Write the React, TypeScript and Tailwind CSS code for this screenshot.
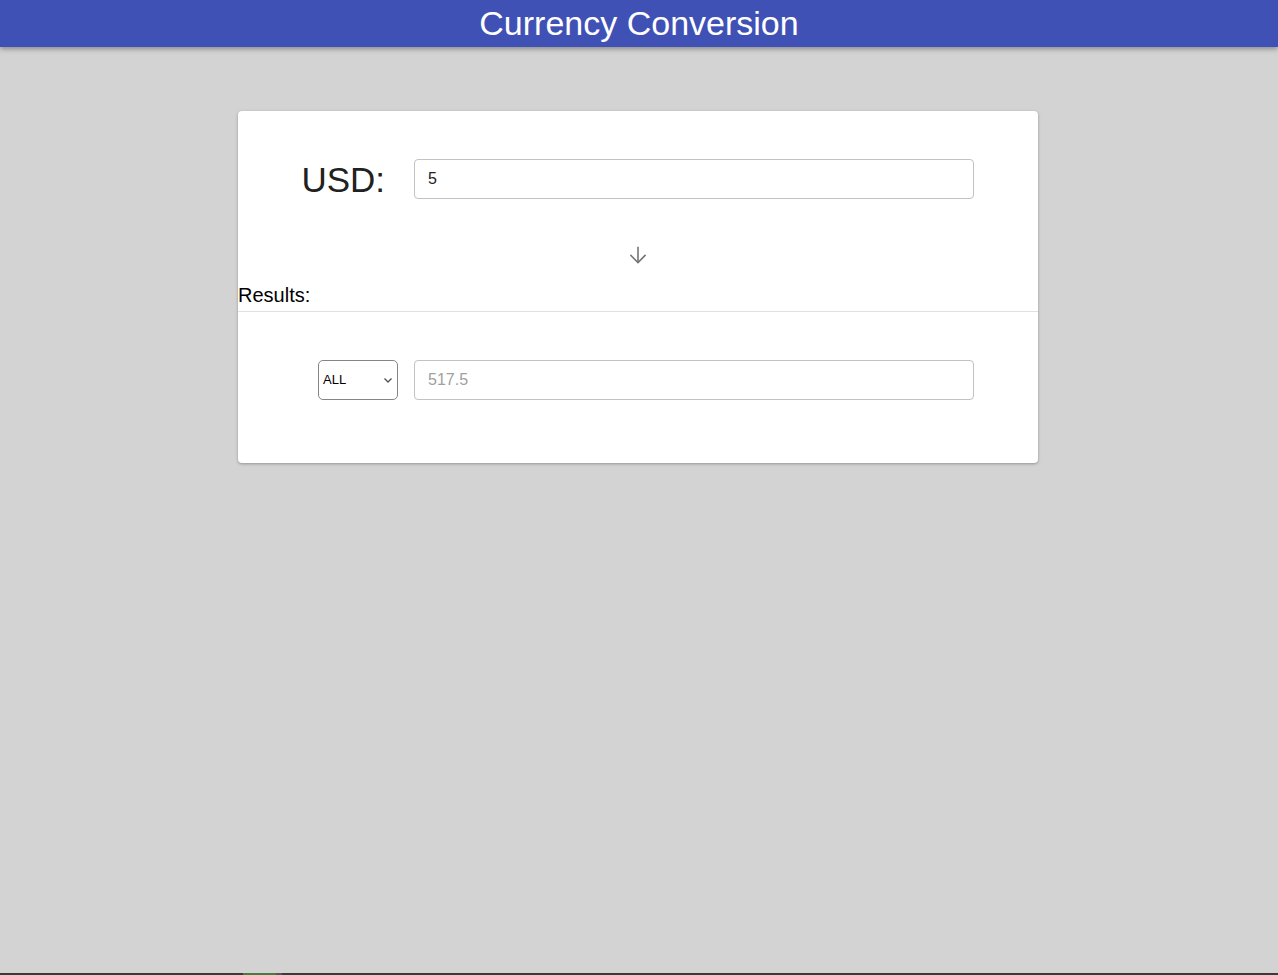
import React from "react";

export default function App() {
  return (
    <div
      className="h-screen flex flex-col bg-[#d3d3d3] overflow-hidden"
      style={{ fontFamily: '"Liberation Sans", Arial, sans-serif' }}
    >
      <header className="relative z-10 h-[47px] shrink-0 bg-[#3f51b5] shadow-[0_2px_5px_rgba(0,0,0,0.35)] flex items-center justify-center">
        <h1 className="text-[34px] text-white font-normal leading-[39px]">Currency Conversion</h1>
      </header>

      <main className="flex-1 flex justify-center items-start pr-[2px]">
        <div className="mt-[64px] w-[800px] bg-white rounded-[4px] shadow-[0_1px_3px_rgba(0,0,0,0.3)]">
          <div className="pt-[48px]">
            <div className="flex items-center h-[40px] pr-[64px]">
              <label className="flex-1 text-right pr-[29px] text-[35px] leading-none text-[#212121]">USD:</label>
              <input
                className="w-[560px] h-[40px] border border-[#c2c2c2] rounded-[4px] pl-[13px] text-[16px] text-[#212121] outline-none"
                defaultValue="5"
              />
            </div>
            <div className="mt-[44px] h-[24px] flex justify-center">
              <svg width="24" height="24" viewBox="0 0 24 24" fill="none" stroke="#757575" strokeWidth="1.6" strokeLinecap="square">
                <path d="M12 4.5v14.5" />
                <path d="M5 12.5l7 7 7-7" />
              </svg>
            </div>
            <div className="mt-[17px] text-[20px] leading-[23px] text-black">Results:</div>
            <div className="mt-[4px] border-t border-[#e0e0e0]" />
          </div>
          <div className="pt-[48px] pb-[63px]">
            <div className="flex items-center h-[40px] pl-[80px] gap-[16px]">
              <div className="relative w-[80px] h-[40px]">
                <select className="appearance-none w-full h-full border border-[#858585] rounded-[5px] pl-[4px] text-[13px] text-black bg-white outline-none">
                  <option>ALL</option>
                </select>
                <svg
                  className="absolute right-[5px] top-[17px] pointer-events-none"
                  width="10"
                  height="7"
                  viewBox="0 0 10 7"
                  fill="none"
                  stroke="#555"
                  strokeWidth="1.4"
                >
                  <path d="M1.5 1.5l3.5 3.5 3.5-3.5" />
                </svg>
              </div>
              <input
                readOnly
                className="w-[560px] h-[40px] border border-[#c2c2c2] rounded-[4px] pl-[13px] text-[16px] text-[#a0a0a0] outline-none"
                value="517.5"
              />
            </div>
          </div>
        </div>
      </main>

      <div className="h-[2px] shrink-0 bg-[#3a3a3a] flex">
        <div className="ml-[243px] w-[33px] bg-[#4b7a3e]" />
        <div className="w-[6px] bg-[#555555]" />
      </div>
    </div>
  );
}
